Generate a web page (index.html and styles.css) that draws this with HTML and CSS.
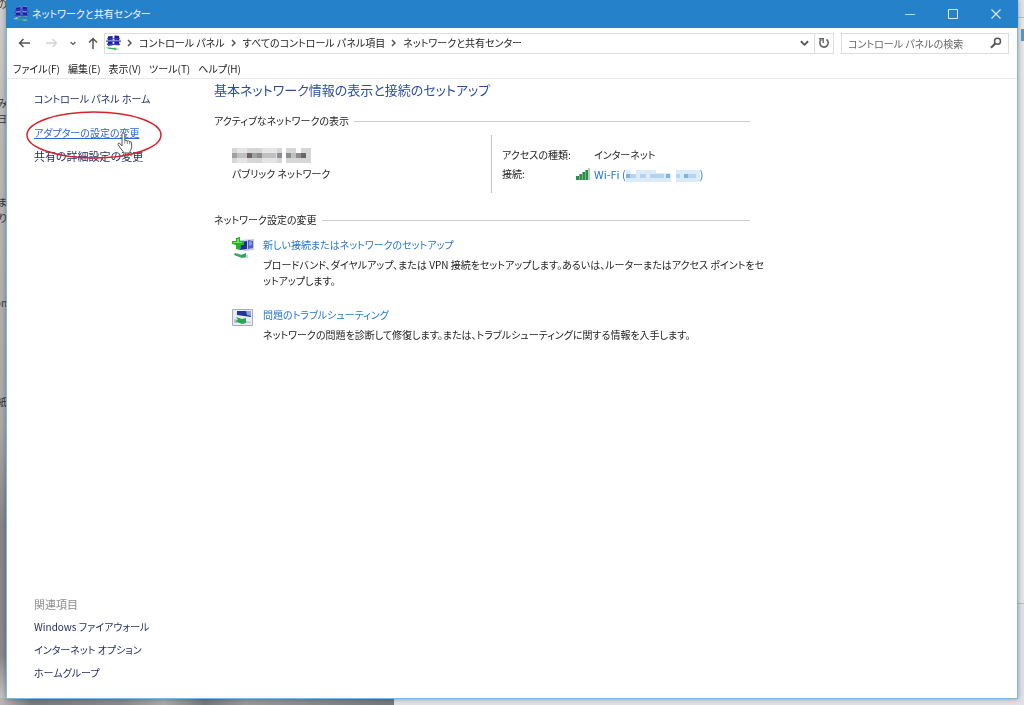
FILE: index.html
```html
<!DOCTYPE html>
<html lang="ja">
<head>
<meta charset="utf-8">
<title>ネットワークと共有センター</title>
<link rel="stylesheet" href="styles.css">
</head>
<body>
<svg class="symbols" aria-hidden="true">
  <symbol id="network" viewBox="0 0 16 16">
    <path fill="#c9d2f4" d="M2 1l5-1v11l-5 1zM9 0h5v11l-5-1z"/>
    <path fill="#1c1c9c" d="M2 1l5-.5v4L2 5zM9 0l5 .5v4.500L9 4.500zM2 7l5-.5v4L2 11zM9 6l5 .5v4L9 10z"/>
    <path stroke="#3b43ba" stroke-width="1.200" d="M0 6h16M1 3.500h14M1 9.500h14"/>
    <path fill="#2fae56" d="M2 12.500l7 1v-1l3 2-3 1.500v-1l-7-1z"/>
    <path stroke="#a8d7b4" d="M0 13h4M10 14.500h4"/>
  </symbol>
  <symbol id="chevron" viewBox="0 0 6 8"><path d="M1 1l3 3-3 3" fill="none" stroke="#555" stroke-width="1.500"/></symbol>
  <symbol id="chevron-down" viewBox="0 0 10 7"><path d="M1 1l4 4 4-4" fill="none" stroke="currentColor" stroke-width="2"/></symbol>
</svg>

<div class="desktop" aria-hidden="true">
  <div class="desktop-left">
    <span class="scrap scrap-1">の</span>
    <span class="scrap scrap-2">み</span>
    <span class="scrap scrap-3">日</span>
    <span class="scrap scrap-4">ま</span>
    <span class="scrap scrap-5">り</span>
    <span class="scrap scrap-6">on</span>
    <span class="scrap scrap-7">紙</span>
  </div>
  <div class="desktop-bottom"></div>
  <div class="desktop-right"><span class="right-panel"></span><span class="right-mark"></span></div>
</div>

<div class="window">
  <header class="titlebar">
    <svg class="icon-16"><use href="#network"/></svg>
    <h1 class="titlebar-text">ネットワークと共有センター</h1>
    <div class="caption">
      <button class="caption-button" aria-label="最小化"><svg viewBox="0 0 10 10" width="10" height="10"><path d="M0 5.500h10" stroke="#b9ddf7"/></svg></button>
      <button class="caption-button" aria-label="最大化"><svg viewBox="0 0 10 10" width="10" height="10"><path d="M.5.5h9v9h-9z" fill="none" stroke="#d5ebfb"/></svg></button>
      <button class="caption-button" aria-label="閉じる"><svg viewBox="0 0 10 10" width="10" height="10"><path d="M.5.5l9 9M9.500.5l-9 9" stroke="#d5ebfb" stroke-width="1.200"/></svg></button>
    </div>
  </header>

  <nav class="navbar">
    <div class="nav-buttons">
      <button class="icon-button" aria-label="戻る"><svg viewBox="0 0 12 10" width="12" height="10"><path d="M12 5H1.500M5.500 1l-4 4 4 4" fill="none" stroke="#555" stroke-width="1.500"/></svg></button>
      <button class="icon-button forward" aria-label="進む"><svg viewBox="0 0 12 10" width="12" height="10"><path d="M0 5h10.500M6.500 1l4 4-4 4" fill="none" stroke="#d2d2d2" stroke-width="1.300"/></svg></button>
      <button class="icon-button" aria-label="最近の場所"><svg width="6" height="5" viewBox="0 0 10 7"><use href="#chevron-down" width="10" height="7"/></svg></button>
      <button class="icon-button" aria-label="上へ"><svg viewBox="0 0 10 12" width="10" height="12"><path d="M5 12V1.500M1 5.500l4-4 4 4" fill="none" stroke="#555" stroke-width="1.500"/></svg></button>
    </div>
    <div class="address">
      <svg class="icon-16"><use href="#network"/></svg>
      <svg class="crumb-arrow"><use href="#chevron"/></svg>
      <a class="crumb" href="#">コントロール パネル</a>
      <svg class="crumb-arrow"><use href="#chevron"/></svg>
      <a class="crumb" href="#">すべてのコントロール パネル項目</a>
      <svg class="crumb-arrow"><use href="#chevron"/></svg>
      <a class="crumb" href="#">ネットワークと共有センター</a>
      <button class="icon-button history" aria-label="以前の場所"><svg width="9" height="7"><use href="#chevron-down"/></svg></button>
      <button class="icon-button refresh" aria-label="更新"><svg viewBox="0 0 12 12" width="12" height="12"><path d="M8.500 2.500A4.200 4.200 0 1 1 3.300 2.700" fill="none" stroke="#666" stroke-width="1.600"/><path d="M1 1.800h4.200V6" fill="none" stroke="#666" stroke-width="1.400"/></svg></button>
    </div>
    <form class="search">
      <input class="search-input" type="search" aria-label="コントロール パネルの検索" placeholder="コントロール パネルの検索">
      <button class="icon-button" type="button" aria-label="検索"><svg viewBox="0 0 12 12" width="12" height="12"><circle cx="7.500" cy="4.300" r="3" fill="none" stroke="#555" stroke-width="1.500"/><path d="M5.300 6.500L1 10.800" stroke="#555" stroke-width="2"/></svg></button>
    </form>
  </nav>

  <div class="menubar">
    <button class="menu">ファイル(F)</button>
    <button class="menu">編集(E)</button>
    <button class="menu">表示(V)</button>
    <button class="menu">ツール(T)</button>
    <button class="menu">ヘルプ(H)</button>
  </div>

  <div class="body">
    <aside class="sidebar">
      <a class="side-link home" href="#">コントロール パネル ホーム</a>
      <div class="marked">
        <a class="side-link active" href="#">アダプターの設定の変更</a>
        <svg class="ring" viewBox="0 0 138 50" aria-hidden="true"><ellipse cx="69" cy="25" rx="67" ry="23" fill="none" stroke="#d8232f" stroke-width="1.500"/></svg>
        <svg class="cursor" viewBox="0 0 16 22" aria-hidden="true"><path d="M5 14V2.500a1.400 1.400 0 0 1 2.800 0V8.500q1.300-1 2.500.5 1.300-.8 2.300.6 1.600-.5 2 1.200v4.500q0 2-1.600 3.700V21H6.200v-1.500Q3 16 1 12.500q-.4-1.800 1.600-1.300z" fill="#fff" stroke="#555" stroke-width="1"/><path d="M7.800 8.500v3M10.300 9v3M12.600 9.600v2.600" stroke="#666" stroke-width=".8"/></svg>
      </div>
      <a class="side-link kanji" href="#">共有の詳細設定の変更</a>
      <div class="related">
        <h2 class="related-title kanji">関連項目</h2>
        <a class="side-link" href="#">Windows ファイアウォール</a>
        <a class="side-link" href="#">インターネット オプション</a>
        <a class="side-link" href="#">ホームグループ</a>
      </div>
    </aside>

    <main class="main">
      <h2 class="heading">基本ネットワーク情報の表示と接続のセットアップ</h2>
      <h3 class="section-title">アクティブなネットワークの表示</h3>
      <div class="network">
        <div class="network-name">
          <svg class="mosaic" viewBox="0 0 79 15" width="79" height="15" role="img" aria-label="ネットワーク名 (非表示)">
            <path fill="#e4e4e4" d="M0 0h50v15H0z"/>
            <path fill="#d6d6d6" d="M0 0h5v15H0zM15 0h15v15H15zM45 0h5v15h-5zM54 0h10v15H54zM69 0h10v15H69zM64 5h5v10h-5z"/>
            <path fill="#c0c0c0" d="M5 5h10v5H5zM30 5h14v5H30zM59 5h5v5h-5z"/>
            <path fill="#a0a0a0" d="M0 5h5v5H0zM20 5h5v5h-5z"/>
            <path fill="#8d8d91" d="M25 5h5v5h-5zM45 5h5v5h-5zM54 5h5v5h-5zM64 5h5v5h-5z"/>
            <path fill="#6c6563" d="M15 5h5v5h-5zM69 5h5v5h-5z"/>
          </svg>
          <span>パブリック ネットワーク</span>
        </div>
        <dl class="facts">
          <dt>アクセスの種類:</dt>
          <dd>インターネット</dd>
          <dt>接続:</dt>
          <dd class="connection">
            <svg class="signal" viewBox="0 0 15 12" width="15" height="12" aria-hidden="true"><path fill="#2c8c48" d="M0 8h3v4H0zM3 6h3v6H3zM6 4h3v8H6zM9 2h3v10H9z"/><path fill="#b4d0b9" d="M3 6h.6v6H3zM6 4h.6v8H6zM9 2h.6v10H9zM12 0h2v12h-2z"/></svg>
            <a class="link wifi" href="#">Wi-Fi (<svg class="mosaic-link" viewBox="0 0 74 12" width="74" height="12" role="img" aria-label="非表示"><path fill="#dcebfa" d="M0 0h5v12H0zM5 4h5v8H5zM10 0h20v12H10zM30 3h15v9H30zM50 0h24v12H50z"/><path fill="#b5d4f2" d="M0 4h10v4H0zM14 4h6v4h-6zM24 4h14v4H24zM50 4h4v4h-4zM62 4h8v4h-8z"/><path fill="#7fb3e6" d="M0 4h4v4H0zM40 4h4v4h-4zM58 4h4v4h-4z"/></svg>)</a>
          </dd>
        </dl>
      </div>

      <h3 class="section-title">ネットワーク設定の変更</h3>
      <div class="task">
        <svg class="task-icon" viewBox="0 0 22 23" aria-hidden="true">
          <path fill="#c4cce8" d="M8 3l14-1v11l-9 1-5-2z"/>
          <path fill="#1e2d9e" d="M9 5l6-1v8l-7 1z"/><path fill="#5060c8" d="M16 3l5 1v7l-5 1z"/><path fill="#8798e0" d="M17 4l3 1v3l-3 1z"/>
          <path fill="#26b326" d="M4 1l4-1v4h4v4H9l-1 5-4-1V8L0 7V4h4z"/><path fill="#79df60" d="M5 2h2v3h3v1H1V5h4z"/>
          <path fill="#cfd6d5" d="M1 16l15 2v3l3 1-6-1z"/><path fill="#2ea85b" d="M3 16l6 2 5-2v4l-4 1-8-3z"/>
        </svg>
        <div class="task-text">
          <a class="link" href="#">新しい接続またはネットワークのセットアップ</a>
          <p class="description">ブロードバンド、ダイヤルアップ、または VPN 接続をセットアップします。あるいは、ルーターまたはアクセス ポイントをセ<br>ットアップします。</p>
        </div>
      </div>
      <div class="task">
        <svg class="task-icon" viewBox="0 0 22 23" aria-hidden="true">
          <path fill="#e9ecf2" stroke="#a8aeb8" d="M.5 2.500h20v16H.5z"/>
          <path fill="#23349c" d="M5 4h9l5 1v5l-7-1-7-1z"/><path fill="#8fa0dc" d="M14 4h5v5l-4-1z"/>
          <path fill="#bcc6ce" d="M2 12l17 3v1H2z"/><path fill="#2ca455" d="M4 10l6 2 4-1v5l-4 1-7-3 3-1z"/>
        </svg>
        <div class="task-text">
          <a class="link" href="#">問題のトラブルシューティング</a>
          <p class="description">ネットワークの問題を診断して修復します。または、トラブルシューティングに関する情報を入手します。</p>
        </div>
      </div>
    </main>
  </div>
</div>
</body>
</html>
```
FILE: styles.css
```css
* { box-sizing: border-box; }

body {
  margin: 0;
  min-height: 100vh;
  padding: 0 6px 6px;
  display: flex;
  background: #8f9093;
  color: #222;
  font: 10px/16px "Noto Sans CJK JP", sans-serif;
  font-feature-settings: "palt";
}

h1, h2, h3, p, dl, dd { margin: 0; font-size: inherit; font-weight: 400; }
a { color: inherit; text-decoration: none; }
svg { flex: none; }
button, input { font: inherit; font-feature-settings: inherit; color: inherit; }
button { display: flex; align-items: center; justify-content: center; padding: 0; border: 0; background: none; }
.symbols { position: absolute; width: 0; height: 0; }

/* desktop behind the window */
.desktop { position: fixed; inset: 0; overflow: hidden; }
.desktop-left {
  position: absolute; inset: 0 auto 0 0; width: 7px; overflow: hidden;
  background: linear-gradient(#d0d0d0, #b8b8b8 20%, #aaa 60%, #838589 75%, #888a8e 93%, #ccc);
}
.desktop-bottom {
  position: absolute; inset: auto 0 0 0; height: 7px;
  background: linear-gradient(90deg, #b8b8b8, #777b80 3%, #8a8a8c 12%, #aaa 16%, #74787c 20%, #999 24%, #74787c 38%, #74787c 38.500%, #dfe1e5 38.500%);
}
.desktop-right { position: absolute; inset: 0 0 0 auto; width: 7px; background: #dfe1e6; }
.right-panel { position: absolute; inset: 17px 0 101px; border: solid #bbb; border-width: 1px 0; background: #e4e5e8; }
.right-mark { position: absolute; right: 0; top: 29px; width: 3px; height: 12px; background: #4a9acb; }
.scrap { position: absolute; right: 0; color: #333; }
.scrap-1 { top: -4px; }
.scrap-2 { top: 95px; }
.scrap-3 { top: 111px; }
.scrap-4 { top: 194px; }
.scrap-5 { top: 210px; }
.scrap-6 { top: 295px; }
.scrap-7 { top: 394px; }

.window {
  position: relative;
  flex: 1;
  display: flex;
  flex-direction: column;
  background: #fff;
  border: solid #7fb6dc;
  border-width: 0 1px 1px;
  box-shadow: 0 0 5px rgba(0, 0, 0, .35);
}

.titlebar { display: flex; align-items: center; height: 28px; margin: 0 -1px; padding: 0 1px 0 8px; background: #2681cb; color: #f2f9ff; }
.icon-16 { width: 15px; height: 16px; }
.titlebar-text { margin-left: 3px; }
.caption { display: flex; align-self: stretch; margin-left: auto; }
.caption-button { width: 43px; }

.navbar { display: flex; align-items: center; height: 30px; padding: 0 8px 0 11px; }
.nav-buttons { display: flex; align-items: center; width: 86px; gap: 12px; }
.icon-button { color: #555; }
.forward { margin-left: 4px; }
.address { flex: 1; display: flex; align-items: center; height: 21px; padding-left: 1px; border: 1px solid #ddd; white-space: nowrap; }
.crumb-arrow { width: 6px; height: 8px; margin: 0 6px; }
.history { width: 20px; margin-left: auto; }
.refresh { width: 19px; height: 100%; border-left: 1px solid #ddd; }
.search { display: flex; align-items: center; width: 168px; height: 21px; margin-left: 7px; padding: 0 6px; border: 1px solid #ddd; }
.search-input { flex: 1; min-width: 0; height: 18px; padding: 0; border: 0; outline: 0; background: none; appearance: none; }
.search-input::placeholder { color: #666; opacity: 1; }

.menubar { display: flex; align-items: center; gap: 8px; height: 21px; padding: 1px 0 0 6px; border-bottom: 1px solid #e9e9e9; }

.body { flex: 1; display: flex; }
.sidebar { display: flex; flex-direction: column; align-items: flex-start; width: 207px; padding: 12px 0 17px 27px; color: #1f2a5c; white-space: nowrap; }
.side-link { display: block; }
.kanji { font-size: 11px; }
.home { margin-bottom: 18px; }
.marked { position: relative; margin-bottom: 7px; }
.active { color: #2f66d8; text-decoration: underline; }
.ring { position: absolute; left: -9px; top: -15px; width: 138px; height: 50px; }
.cursor { position: absolute; left: 83px; top: 7px; width: 16px; height: 22px; }
.related { display: flex; flex-direction: column; gap: 7px; margin-top: auto; }
.related-title { color: #8c8c8c; }

.main { width: 536px; padding-top: 1px; }
.heading { color: #2a4da0; font-size: 13px; line-height: 20px; }
.section-title { display: flex; align-items: center; gap: 5px; margin-top: 13px; }
.section-title::after { content: ""; flex: 1; height: 1px; background: #ccc; }
.network { display: flex; margin: 6px 0 19px; height: 58px; }
.network-name { display: flex; flex-direction: column; gap: 3px; width: 278px; padding: 13px 0 0 18px; border-right: 1px solid #c4c4c4; }
.facts { display: grid; grid-template-columns: 75px auto; align-content: start; gap: 3px 17px; padding: 12px 0 0 10px; white-space: nowrap; }
.connection { display: flex; align-items: center; gap: 3px; margin-left: -18px; }
.link { color: #2676c8; }
.wifi { font-size: 11px; }
.mosaic-link { vertical-align: middle; }

.task { display: flex; gap: 9px; margin: 9px 0 18px 18px; }
.task-icon { width: 22px; height: 23px; }
.task-text { flex: 1; min-width: 0; }
.description { margin-top: 4px; white-space: nowrap; }
```
